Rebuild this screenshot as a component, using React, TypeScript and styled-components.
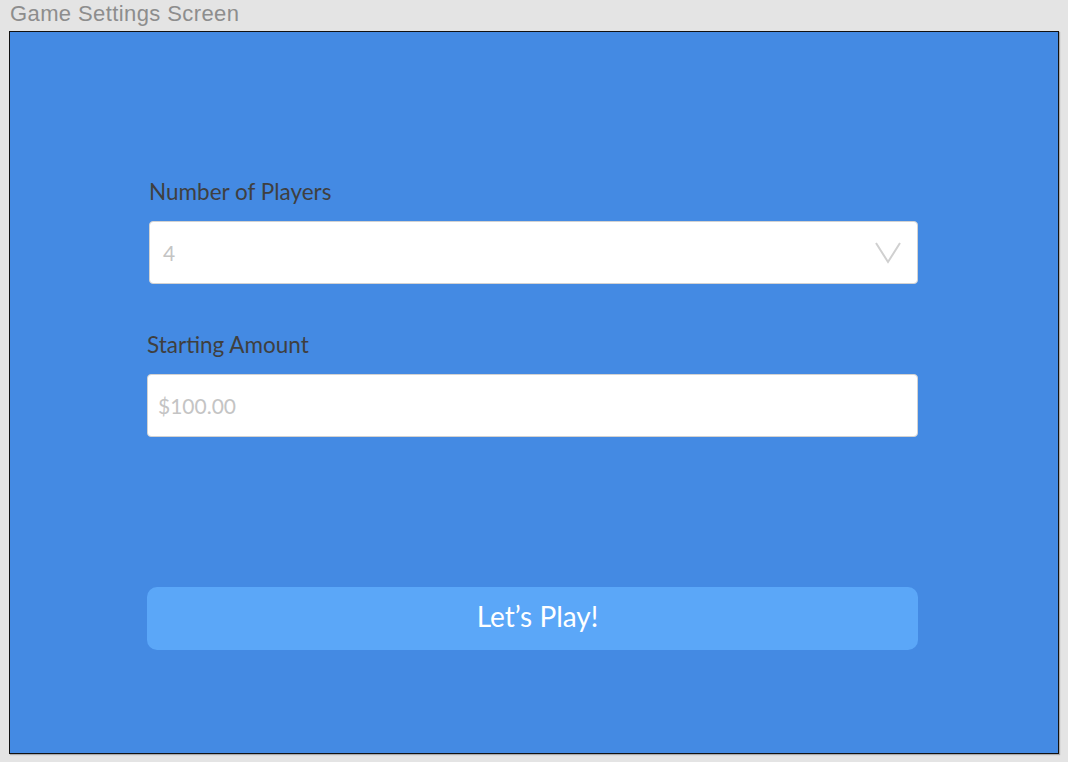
import React from "react";
import styled, { createGlobalStyle } from "styled-components";

const Global = createGlobalStyle`
  html, body { margin: 0; padding: 0; background: #e4e4e4; }
  body { width: 1068px; height: 762px; overflow: hidden; }
`;

const Page = styled.div`
  display: flex;
  flex-direction: column;
  padding: 0 0 0 9px;
`;

const Title = styled.div`
  font-family: "Liberation Sans", Arial, sans-serif;
  font-size: 22px;
  letter-spacing: 0.4px;
  line-height: 28px;
  color: #8d8d8d;
  padding-left: 1px;
  height: 31px;
`;

const Frame = styled.div`
  box-sizing: border-box;
  width: 1050px;
  height: 723px;
  border: 1px solid #111;
  background: #448ae3;
  box-shadow: 1px 1px 1px rgba(0, 0, 0, 0.25);
  display: flex;
  flex-direction: column;
  padding: 146px 0 0 137px;
`;

const Form = styled.div`
  width: 771px;
  display: flex;
  flex-direction: column;
`;

const Label = styled.div<{ $indent?: number }>`
  font-family: Lato, "Noto Sans", sans-serif;
  font-size: 22.5px;
  line-height: 28px;
  color: #3f3f3f;
  padding-left: ${(p) => p.$indent ?? 0}px;
  margin-bottom: 15px;
`;

const Field = styled.div<{ $indent?: number; $pad: number }>`
  box-sizing: border-box;
  height: 63px;
  margin-left: ${(p) => p.$indent ?? 0}px;
  background: #fff;
  border: 1px solid #d2d2d2;
  border-radius: 4px;
  display: flex;
  align-items: center;
  justify-content: space-between;
  padding: 0 16px 0 ${(p) => p.$pad}px;
  font-family: Lato, "Noto Sans", sans-serif;
  font-size: 21px;
  color: #c4c4c4;
`;

const Group = styled.div<{ $gap: number }>`
  display: flex;
  flex-direction: column;
  margin-bottom: ${(p) => p.$gap}px;
`;

const Button = styled.button`
  box-sizing: border-box;
  height: 63px;
  width: 100%;
  border: none;
  border-radius: 10px;
  background: #5ba7f8;
  color: #fff;
  font-family: Lato, "Noto Sans", sans-serif;
  font-size: 28px;
  padding: 0 0 6px 10px;
  cursor: pointer;
`;

export default function App() {
  return (
    <>
      <Global />
      <Page>
        <Title>Game Settings Screen</Title>
        <Frame>
          <Form>
            <Group $gap={47}>
              <Label $indent={2}>Number of Players</Label>
              <Field $indent={2} $pad={13}>
                <span>4</span>
                <svg width="26" height="22" viewBox="0 0 26 22">
                  <path d="M1 1 L13 20 L25 1" fill="none" stroke="#d0d0d0" strokeWidth="2" />
                </svg>
              </Field>
            </Group>
            <Group $gap={150}>
              <Label>Starting Amount</Label>
              <Field $pad={10}>
                <span>$100.00</span>
              </Field>
            </Group>
            <Button>Let’s Play!</Button>
          </Form>
        </Frame>
      </Page>
    </>
  );
}
